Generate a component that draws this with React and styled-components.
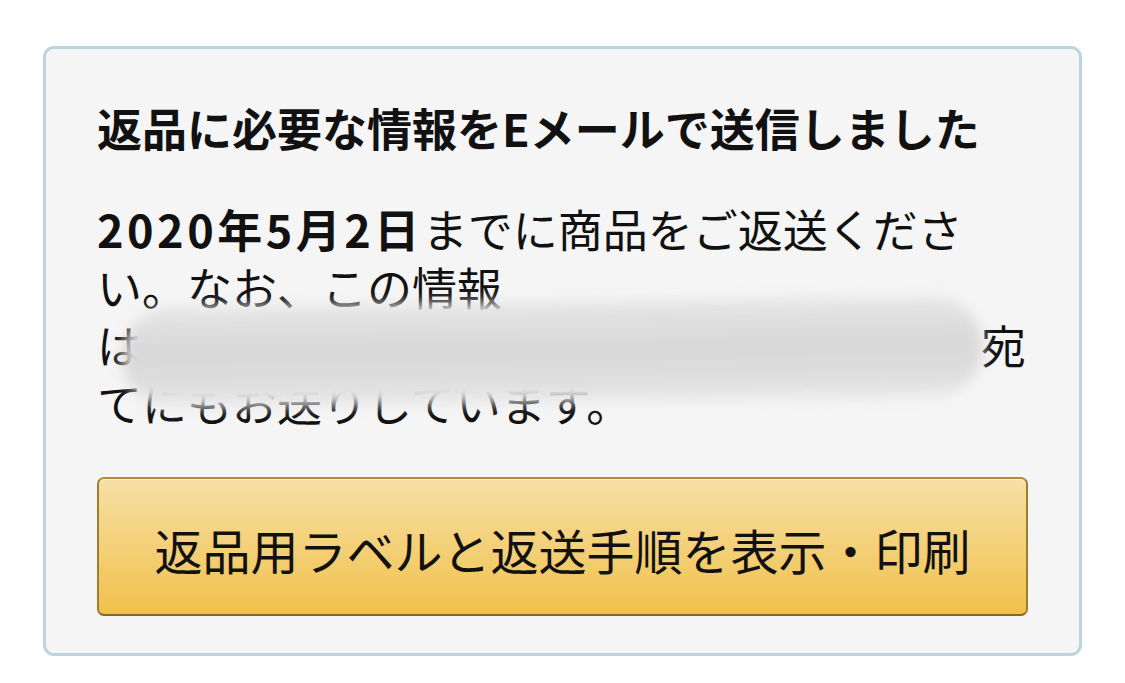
import React from "react";
import styled, { createGlobalStyle } from "styled-components";

const GlobalStyle = createGlobalStyle`
  html, body {
    margin: 0;
    padding: 0;
    background: #ffffff;
  }
  body {
    font-family: "Noto Sans CJK JP", "Noto Sans", sans-serif;
    color: #111111;
  }
`;

const Page = styled.div`
  padding: 46px 43px 27px;
`;

const Card = styled.section`
  background: #f5f5f5;
  border: 3px solid #bcd4df;
  border-radius: 11px;
  padding: 50px 51px 37px;
  display: flex;
  flex-direction: column;
`;

const Title = styled.h2`
  margin: 0;
  font-size: 45px;
  line-height: 57px;
  font-weight: 700;
`;

const Message = styled.p`
  margin: 44px 0 0;
  font-size: 45px;
  line-height: 58px;
  font-weight: 400;
  line-break: strict;
`;

const Strong = styled.strong`
  font-weight: 700;
  letter-spacing: 3.5px;
`;

const NoWrap = styled.span`
  white-space: nowrap;
`;

const Redacted = styled.span`
  position: relative;
  display: inline-block;
  width: ${(p) => p.width}px;
  height: 1em;
  vertical-align: middle;
`;

const Smudge = styled.span`
  position: absolute;
  left: -20px;
  right: -2px;
  top: -27px;
  bottom: -28px;
  border-radius: 50px;
  background: linear-gradient(180deg, #e6e6e6 0%, #d9d9d9 40%, #dbdbdb 70%, #e8e8e8 100%);
  filter: blur(7px);
  transform: rotate(-0.8deg);
`;

const ActionButton = styled.button`
  margin-top: 45px;
  height: 139px;
  width: 100%;
  border: 2px solid #a88734;
  border-color: #b08d3c #9c7e31 #846a29;
  border-radius: 7px;
  background: linear-gradient(180deg, #f7dfa5 0%, #f0c14b 100%);
  box-shadow: inset 0 1px 0 rgba(255, 255, 255, 0.6);
  font-family: "Noto Sans CJK JP", "Noto Sans", sans-serif;
  font-size: 48px;
  font-weight: 400;
  color: #111111;
  padding: 4px 0 0;
  cursor: pointer;
`;

export default function App() {
  return (
    <Page>
      <GlobalStyle />
      <Card>
        <Title>返品に必要な情報をEメールで送信しました</Title>
        <Message>
          <Strong>2020年5月2日</Strong>までに商品をご返送ください。なお、この情報
          <NoWrap>
            は
            <Redacted width={839}>
              <Smudge />
            </Redacted>
            宛
          </NoWrap>
          てにもお送りしています。
        </Message>
        <ActionButton>返品用ラベルと返送手順を表示・印刷</ActionButton>
      </Card>
    </Page>
  );
}
